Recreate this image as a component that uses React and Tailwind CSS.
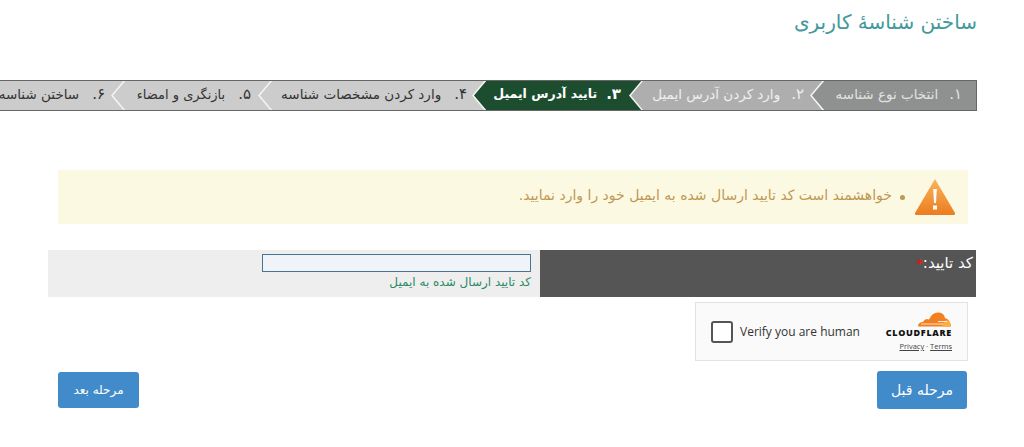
import React from "react";

const steps = [
  { num: "۱.", label: "انتخاب نوع شناسه", width: "w-[152px]", pad: "pr-[14px] gap-[11px]", bg: "bg-[#8f9190]", fill: "#8f9190", text: "text-[#e2e2e2] text-[13.5px]" },
  { num: "۲.", label: "وارد کردن آدرس ایمیل", width: "w-[181px]", pad: "pr-[20px] gap-[11px]", bg: "bg-[#aeaeae]", fill: "#aeaeae", text: "text-[#f0f0f0] text-[13.5px]" },
  { num: "۳.", label: "تایید آدرس ایمیل", width: "w-[157px]", pad: "pr-[22px] gap-[9px]", bg: "bg-[#1d4d2f]", fill: "#1d4d2f", text: "text-white font-bold text-[12.5px]" },
  { num: "۴.", label: "وارد کردن مشخصات شناسه", width: "w-[214px]", pad: "pr-[19px] gap-[13px]", bg: "bg-[#cccccc]", fill: "#cccccc", text: "text-[#333] text-[13.5px]" },
  { num: "۵.", label: "بازنگری و امضاء", width: "w-[147px]", pad: "pr-[21px] gap-[13px]", bg: "bg-[#cccccc]", fill: "#cccccc", text: "text-[#333] text-[13px]" },
  { num: "۶.", label: "ساختن شناسه", width: "w-[140px]", pad: "pr-[20px] gap-[13px]", bg: "bg-[#cccccc]", fill: "#cccccc", text: "text-[#333] text-[13.5px]", last: true },
];

const Step = ({ step, index }) => (
  <div className={`relative shrink-0 h-full flex items-center pb-[2px] whitespace-nowrap ${step.width} ${step.pad} ${step.bg} ${step.text}`} style={{ zIndex: 10 - index }}>
    <span className="text-[15px]">{step.num}</span>
    <span>{step.label}</span>
    {!step.last && (
      <svg className="absolute top-0 right-full" width="14" height="29" viewBox="0 0 14 29">
        <polygon points="14,0 1,14.5 14,29" fill={step.fill} />
        <polyline points="14,-1 1,14.5 14,30" fill="none" stroke="#f4f4f4" strokeWidth="1.5" />
      </svg>
    )}
  </div>
);

const WarningIcon = () => (
  <svg width="42" height="38" viewBox="0 0 42 38">
    <defs>
      <linearGradient id="warn" x1="0" y1="0" x2="0" y2="1">
        <stop offset="0" stopColor="#f9b45c" />
        <stop offset="1" stopColor="#ec7c1e" />
      </linearGradient>
    </defs>
    <path d="M21 1 L41 35 Q41.5 37 39 37 L3 37 Q0.5 37 1 35 Z" fill="url(#warn)" />
    <path d="M19.2 11 H22.8 L22 25 H20 Z" fill="#fff" />
    <rect x="19" y="27.5" width="4" height="4" fill="#fff" />
  </svg>
);

const CloudIcon = () => (
  <svg width="35" height="15" viewBox="0 0 35 15">
    <path d="M1 14.5 Q1 10 6 10 Q8 6 12 7.5 Q15 0.5 21 0.5 Q27 0.5 28 6 Q33 7 34 14.5 Z" fill="#f38020" />
    <path d="M25 14.5 Q26 9 30 8 Q33.5 9 34 14.5 Z" fill="#fbad41" />
    <path d="M4 12 H26 M21 9.5 H30" stroke="#fff" strokeWidth="0.8" />
  </svg>
);

export default function App() {
  return (
    <div dir="rtl" className="w-[1024px] h-[447px] overflow-hidden bg-white font-['DejaVu_Sans','Noto_Sans',sans-serif]">
      <div className="h-[80px] pt-[9px] pr-[47px] text-[20px] leading-[26px] text-[#43999b]">ساختن شناسهٔ کاربری</div>

      <div className="h-[31px] mr-[47px] flex overflow-hidden border-y border-r border-[#666]">
        {steps.map((step, i) => (
          <Step key={step.num} step={step} index={i} />
        ))}
      </div>

      <div className="mt-[59px] mr-[56px] ml-[58px] h-[54px] bg-[#fcf9e3] flex items-center pr-[12px] text-[#c09853] text-[14px]">
        <WarningIcon />
        <span className="mr-[9px] ml-[8px] w-[5px] h-[5px] rounded-full bg-[#c09853]"></span>
        <span className="mb-[3px]">خواهشمند است کد تایید ارسال شده به ایمیل خود را وارد نمایید.</span>
      </div>

      <div className="mt-[26px] mr-[48px] ml-[48px] h-[47px] flex">
        <div className="w-[436px] bg-[#555555] text-white text-[15px] leading-[22px] pr-[3px] pt-[2px]">
          کد تایید:<span className="text-[#f01010] text-[12px] font-bold">*</span>
        </div>
        <div className="flex-1 bg-[#eeeeee] pr-[9px] pt-[4px]">
          <input className="block w-[269px] h-[18px] border border-[#4a7590] bg-[#f0f4f8] outline-none" />
          <div className="mt-[1px] text-[12px] leading-[18px] text-[#2a8a68]">کد تایید ارسال شده به ایمیل</div>
        </div>
      </div>

      <div dir="ltr" className="mt-[5px] mr-[56px] ml-auto w-[273px] h-[59px] border border-[#e2e2e2] bg-[#fafafa] flex items-center pl-[15px] pr-[15px] font-['Open_Sans',sans-serif]">
        <span className="w-[22px] h-[22px] rounded-[3px] border-2 border-[#555] bg-white"></span>
        <span className="ml-[7px] text-[12px] text-[#333]">Verify you are human</span>
        <div className="ml-auto flex flex-col items-end">
          <CloudIcon />
          <span className="mt-[1px] text-[9px] leading-[10px] font-extrabold tracking-[0.7px] text-[#111]">CLOUDFLARE</span>
          <span className="mt-[4px] text-[7.5px] leading-[9px] text-[#444]"><span className="underline">Privacy</span> · <span className="underline">Terms</span></span>
        </div>
      </div>

      <div className="mt-[10px] mr-[57px] ml-[58px] flex justify-between items-center">
        <button className="w-[90px] h-[38px] rounded-[3px] bg-[#428bca] text-white text-[14px]">مرحله قبل</button>
        <button className="w-[81px] h-[36px] rounded-[3px] bg-[#428bca] text-white text-[12px]">مرحله بعد</button>
      </div>
    </div>
  );
}
